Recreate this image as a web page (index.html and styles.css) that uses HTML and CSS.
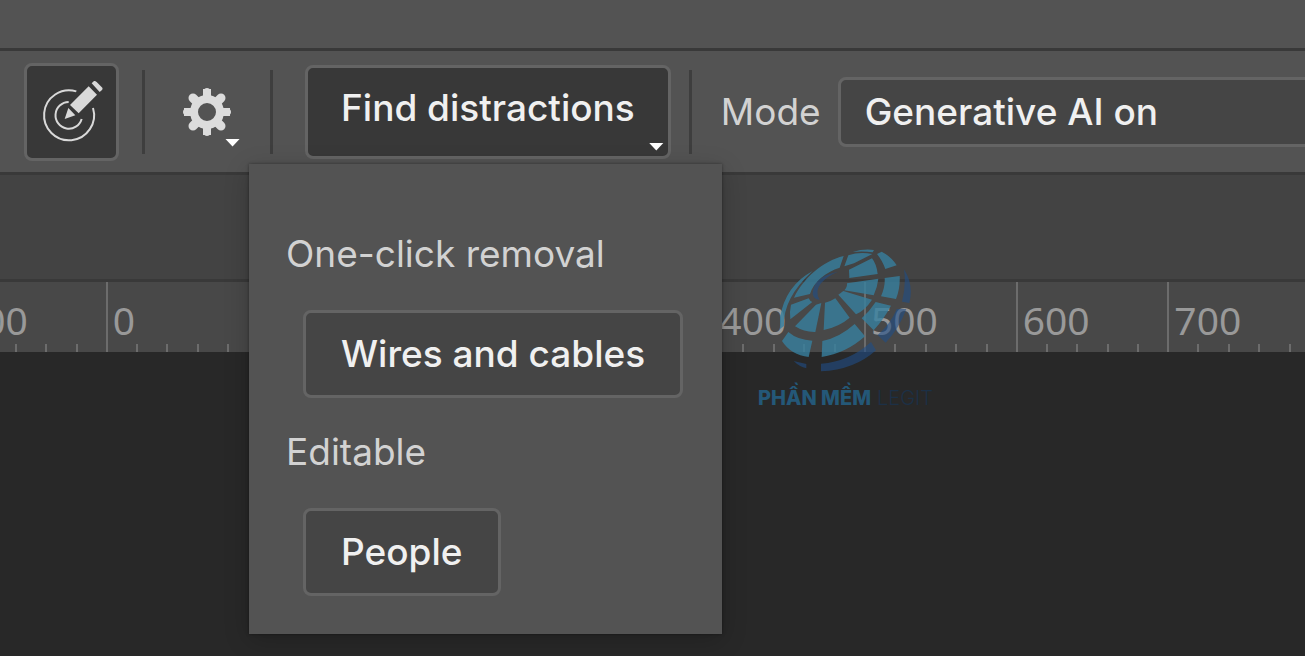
FILE: index.html
```html
<!DOCTYPE html>
<html lang="en">
<head>
    <meta charset="UTF-8">
    <meta name="viewport" content="width=device-width, initial-scale=1.0">
    <title>Remove Tool</title>
    <link rel="stylesheet" href="styles.css">
</head>
<body>
    <header class="title-bar"></header>

    <div class="toolbar">
        <button class="button brush active" aria-label="Brush mode">
            <svg width="75" height="70" viewBox="0 0 225 210">
                <g fill="none" stroke="#d9d9d9" stroke-width="6">
                    <path d="M127 43A75 75 0 1 0 177 93"/>
                    <path d="M104 75A40 40 0 1 0 143 126"/>
                </g>
                <path fill="#d9d9d9" d="M164 28L189 53L134 109L108 84zM173 19L180 12Q184 11 188 15L205 32Q207 36 204 39L197 45zM103 93L124 115L92 126z"/>
            </svg>
        </button>
        <span class="separator"></span>
        <button class="settings" aria-label="Settings">
            <svg width="48" height="48" viewBox="0 0 48 48">
                <g fill="none" stroke="#dcdcdc">
                    <circle cx="24" cy="24" r="13" stroke-width="8"/>
                    <path stroke-width="6" stroke-linecap="round" d="M24 3V9M24 39V45M3 24H9M39 24H45"/>
                    <path stroke-width="8" d="M24 1V9M24 39V47M1 24H9M39 24H47"/>
                    <path stroke-width="9" stroke-linecap="round" d="M10 10L14 14M34 34L38 38M10 38L14 34M34 14L38 10"/>
                </g>
            </svg>
            <span class="caret"></span>
        </button>
        <span class="separator"></span>
        <div class="dropdown">
            <button class="button find active" aria-haspopup="true" aria-expanded="true">Find distractions<span class="caret"></span></button>
            <div class="menu">
                <h2>One-click removal</h2>
                <button class="button">Wires and cables</button>
                <h2>Editable</h2>
                <button class="button">People</button>
            </div>
        </div>
        <span class="separator"></span>
        <label for="mode">Mode</label>
        <select id="mode">
            <option>Generative AI on</option>
        </select>
    </div>

    <div class="tab-bar"></div>

    <div class="ruler">
        <ol>
            <li>100</li>
            <li>0</li>
            <li>100</li>
            <li>200</li>
            <li>300</li>
            <li>400</li>
            <li>500</li>
            <li>600</li>
            <li>700</li>
        </ol>
    </div>

    <main class="canvas"></main>

    <!-- Watermark -->
    <div class="watermark">
        <svg width="140" height="130" viewBox="0 0 420 390">
            <g fill="#37809f" opacity="0.8">
                <path d="M203 33C140 48 82 100 54 158L102 147C112 112 150 80 191 68z"/>
                <path d="M230 21Q262 11 294 15L290 22Q262 18 230 21z"/>
                <path d="M217 31Q250 20 289 27L234 55L205 64z"/>
                <path d="M303 27L317 20Q346 35 362 61L328 72Q318 45 303 27z"/>
                <path d="M219 74L288 40Q302 58 305 87L220 99z"/>
                <path d="M213 115L307 101Q304 128 293 151L205 136Q214 127 213 115z"/>
                <path d="M326 99L371 93Q373 130 360 162L315 154Q328 125 326 99z"/>
                <path d="M202 138L288 164Q268 195 240 208L187 149z"/>
                <path d="M178 160L221 218Q190 245 143 255L147 173Q165 169 178 160z"/>
                <path d="M136 174L118 261Q85 262 57 244L120 179z"/>
                <path d="M45 179L98 160Q102 169 109 171L43 223Q40 200 45 179z"/>
                <path d="M37 261Q65 285 109 287L98 336Q45 330 18 288z"/>
                <path d="M139 288Q190 278 236 237L267 274Q210 325 137 336z"/>
                <path d="M299 171L345 182Q325 220 293 256L257 220Q280 200 299 171z"/>
                <path d="M110 78Q28 122 12 218V252L24 243Q20 160 110 78z"/>
            </g>
            <g fill="#204e87" opacity="0.6">
                <path d="M384 73Q414 120 400 174L378 170Q391 120 384 73z"/>
                <path d="M362 192H391Q370 250 329 293L305 270Q345 235 362 192z"/>
                <path d="M135 356Q220 350 285 291L300 316Q235 375 135 379z"/>
                <path d="M53 348L91 357V370Q70 365 53 348z"/>
                <path d="M186 80Q110 95 110 148Q115 165 131 164Q115 140 135 115Q155 92 186 80z"/>
            </g>
        </svg>
        <p><strong>PHẦN MỀM</strong> <span>LEGIT</span></p>
    </div>
</body>
</html>
```
FILE: styles.css
```css
* {
    box-sizing: border-box;
}

body {
    margin: 0;
    position: relative;
    min-height: 100vh;
    display: flex;
    flex-direction: column;
    overflow: hidden;
    background-color: #282828;
    color: #d2d2d2;
    font-family: Inter, sans-serif;
    font-size: 37px;
}

button, select {
    font: inherit;
    color: #f0f0f0;
    cursor: pointer;
}

.title-bar {
    height: 51px;
    background-color: #535353;
    border-bottom: 3px solid #393939;
}

/* Options bar */
.toolbar {
    display: flex;
    align-items: center;
    height: 124px;
    padding-left: 24px;
    background-color: #535353;
    border-bottom: 3px solid #393939;
}

.separator {
    width: 3px;
    height: 84px;
    background-color: #3e3e3e;
}

.button {
    height: 88px;
    padding: 0 35px;
    background-color: #454545;
    border: 3px solid #646464;
    border-radius: 8px;
    font-weight: 500;
}

.button.active {
    background-color: #383838;
}

.brush {
    display: flex;
    align-items: center;
    justify-content: center;
    width: 95px;
    height: 98px;
    padding: 0;
    margin-right: 23px;
}

.settings {
    position: relative;
    width: 57px;
    height: 72px;
    padding: 0;
    margin: 0 30px 0 38px;
    text-align: left;
    background: none;
    border: none;
}

.settings svg {
    display: block;
}

.caret {
    position: absolute;
    right: 4px;
    bottom: 5px;
    width: 15px;
    height: 8px;
    background-color: #fff;
    clip-path: polygon(0 0, 100% 0, 50% 100%);
}

.settings .caret {
    right: 0;
    bottom: 1px;
}

.dropdown {
    position: relative;
    margin: 0 18px 0 32px;
}

.find {
    display: block;
    position: relative;
    height: 94px;
    padding: 0 33px 8px;
}

.menu {
    position: absolute;
    top: 99px;
    left: -56px;
    z-index: 1;
    width: 473px;
    padding: 68px 37px 38px;
    background-color: #535353;
    box-shadow: 0 0 3px rgba(0, 0, 0, 0.4), 0 6px 24px rgba(0, 0, 0, 0.2);
}

.menu h2 {
    margin: 0 0 34px;
    font-size: 37px;
    font-weight: 400;
    line-height: 44px;
}

.menu .button {
    display: block;
    margin: 0 0 32px 17px;
}

.menu .button:last-child {
    margin-bottom: 0;
}

label {
    margin: 0 17px 0 29px;
}

select {
    flex: 1;
    height: 70px;
    margin-right: -12px;
    padding: 0 24px;
    appearance: none;
    background-color: #454545;
    border: 3px solid #646464;
    border-radius: 8px;
    font-weight: 500;
}

.tab-bar {
    height: 107px;
    background-color: #434343;
    border-bottom: 3px solid #393939;
}

/* Ruler: one column for each 100 px, ticks drawn as backgrounds */
.ruler {
    overflow: hidden;
    background-color: #484848;
}

.ruler ol {
    display: grid;
    grid-template-columns: repeat(9, 1fr);
    margin: 0 -14px 0 -46px;
    padding: 0;
    list-style: none;
    color: #999;
    font-family: "Noto Sans", sans-serif;
    font-size: 39px;
    line-height: 54px;
}

.ruler li {
    height: 70px;
    padding: 11px 0 0 7px;
    background-image:
        linear-gradient(#6c6c6c, #6c6c6c),
        repeating-linear-gradient(to right, #6c6c6c 0 2px, transparent 2px 20%);
    background-size: 2px 100%, 100% 8px;
    background-position: 0 0, 0 100%;
    background-repeat: no-repeat;
}

.canvas {
    flex: 1;
    background-color: #282828;
}

.watermark {
    position: absolute;
    top: 245px;
    left: 758px;
    width: 175px;
    text-align: center;
    pointer-events: none;
}

.watermark svg {
    display: block;
    margin: 0 auto;
}

.watermark p {
    display: flex;
    justify-content: space-between;
    margin: 11px 0 0;
    color: #245878;
    font-size: 20px;
    line-height: 24px;
    white-space: nowrap;
}

.watermark strong {
    font-weight: 800;
}

.watermark span {
    color: #1c3046;
    font-weight: 300;
}
```
